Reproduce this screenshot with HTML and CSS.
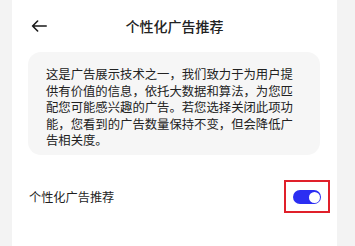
FILE: index.html
```html
<!DOCTYPE html>
<html lang="zh-CN">
<head>
<meta charset="utf-8">
<link rel="stylesheet" href="styles.css">
</head>
<body>
<div class="panel">
  <header class="topbar">
    <span class="back">
      <svg width="16" height="12" viewBox="0 0 16 12"><path d="M15.2 6H1.6M6.6 1L1.6 6l5 5" fill="none" stroke="#1a1a1a" stroke-width="1.6" stroke-linecap="round" stroke-linejoin="round"/></svg>
    </span>
    <h1 class="title">个性化广告推荐</h1>
  </header>
  <div class="note">这是广告展示技术之一，我们致力于为用户提供有价值的信息，依托大数据和算法，为您匹配您可能感兴趣的广告。若您选择关闭此项功能，您看到的广告数量保持不变，但会降低广告相关度。</div>
  <div class="row">
    <span class="label">个性化广告推荐</span>
    <span class="mark"><span class="switch"><span class="knob"></span></span></span>
  </div>
</div>
</body>
</html>
```
FILE: styles.css
```css
html, body {
  margin: 0;
  padding: 0;
  background: #f3f3f3;
  font-family: "Noto Sans CJK SC", "Noto Sans", sans-serif;
}
.panel {
  margin: 0 18px 0 12px;
  background: #ffffff;
  height: 246px;
  display: flex;
  flex-direction: column;
}
.topbar {
  height: 52px;
  position: relative;
  display: flex;
  align-items: center;
  justify-content: center;
}
.back {
  position: absolute;
  left: 19px;
  top: 20px;
  display: flex;
}
.title {
  margin: 0;
  font-size: 14px;
  font-weight: 500;
  color: #222;
  line-height: 20px;
}
.note {
  margin: 0 17px 0 16px;
  background: #f6f6f6;
  border-radius: 13px;
  padding: 14px 18px 6px 18px;
  font-size: 12.35px;
  line-height: 16.5px;
  color: #222;
}
.row {
  margin-top: 18px;
  height: 48px;
  display: flex;
  align-items: center;
  justify-content: space-between;
  padding: 0 7px 0 17px;
}
.label {
  font-size: 12.2px;
  color: #1f1f1f;
}
.mark {
  border: 2px solid #e0202a;
  padding: 8px 7px 7px 7px;
  display: flex;
}
.switch {
  width: 28px;
  height: 14px;
  border-radius: 7px;
  background: #2b2ef2;
  display: flex;
  align-items: center;
  justify-content: flex-end;
  padding: 0 1.5px;
  box-sizing: border-box;
}
.knob {
  width: 11px;
  height: 11px;
  border-radius: 50%;
  background: #fff;
}
```
